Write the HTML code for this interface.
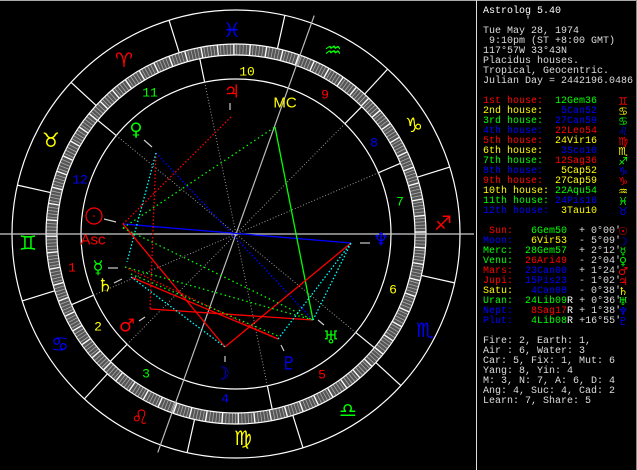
<!DOCTYPE html>
<html><head><meta charset="utf-8"><style>
html,body{margin:0;padding:0;background:#000;width:637px;height:470px;overflow:hidden;position:relative}
svg{display:block;position:absolute;left:0;top:0}
.g{font-family:"DejaVu Sans",sans-serif}
.p{font-family:"Liberation Mono",monospace}
pre{position:absolute;left:483px;margin:0;font-family:"Liberation Mono",monospace;font-size:10px;line-height:10px;color:#ddd;white-space:pre}
.r{color:#f00}.y{color:#ff0}.gr{color:#0f0}.b{color:#00f}.w{color:#fff}
</style></head><body>
<svg width="637" height="470" viewBox="0 0 637 470" xmlns="http://www.w3.org/2000/svg">
<rect width="637" height="470" fill="#000"/>
<line x1="0" y1="0.5" x2="637" y2="0.5" stroke="#aaa"/>
<line x1="476.5" y1="0" x2="476.5" y2="470" stroke="#ddd"/>
<line x1="636.5" y1="0" x2="636.5" y2="470" stroke="#888"/>

<g fill="none" stroke="#fff" stroke-width="1.2">
<circle cx="236" cy="234" r="224"/>
<circle cx="236" cy="234" r="155"/>
</g>
<circle cx="236" cy="234" r="184.5" fill="none" stroke="#555" stroke-width="10"/>
<circle cx="236" cy="234" r="184.5" fill="none" stroke="#aaa" stroke-width="10" stroke-dasharray="0.8 2.42"/>
<circle cx="236" cy="234" r="184.5" fill="none" stroke="#fff" stroke-width="10" stroke-dasharray="1.2 14.9" stroke-dashoffset="3"/>
<g fill="none" stroke="#fff" stroke-width="1.2">
<circle cx="236" cy="234" r="190"/>
<circle cx="236" cy="234" r="179"/>
</g>

<g stroke="#fff" stroke-width="1.2">
<line x1="12" y1="234" x2="46" y2="234" transform="rotate(72.6 236 234)"/>
<line x1="12" y1="234" x2="46" y2="234" transform="rotate(42.6 236 234)"/>
<line x1="12" y1="234" x2="46" y2="234" transform="rotate(12.6 236 234)"/>
<line x1="12" y1="234" x2="46" y2="234" transform="rotate(-17.4 236 234)"/>
<line x1="12" y1="234" x2="46" y2="234" transform="rotate(-47.4 236 234)"/>
<line x1="12" y1="234" x2="46" y2="234" transform="rotate(-77.4 236 234)"/>
<line x1="12" y1="234" x2="46" y2="234" transform="rotate(-107.4 236 234)"/>
<line x1="12" y1="234" x2="46" y2="234" transform="rotate(-137.4 236 234)"/>
<line x1="12" y1="234" x2="46" y2="234" transform="rotate(-167.4 236 234)"/>
<line x1="12" y1="234" x2="46" y2="234" transform="rotate(-197.4 236 234)"/>
<line x1="12" y1="234" x2="46" y2="234" transform="rotate(-227.4 236 234)"/>
<line x1="12" y1="234" x2="46" y2="234" transform="rotate(-257.4 236 234)"/>
</g>
<g stroke="#fff" stroke-width="1.2">
<line x1="57" y1="234" x2="81" y2="234" transform="rotate(-23.27 236 234)"/>
<line x1="57" y1="234" x2="81" y2="234" transform="rotate(-45.38 236 234)"/>
<line x1="57" y1="234" x2="81" y2="234" transform="rotate(-101.67 236 234)"/>
<line x1="57" y1="234" x2="81" y2="234" transform="rotate(-140.57 236 234)"/>
<line x1="57" y1="234" x2="81" y2="234" transform="rotate(-203.27 236 234)"/>
<line x1="57" y1="234" x2="81" y2="234" transform="rotate(-225.38 236 234)"/>
<line x1="57" y1="234" x2="81" y2="234" transform="rotate(-281.67 236 234)"/>
<line x1="57" y1="234" x2="81" y2="234" transform="rotate(39.43 236 234)"/>
</g>
<g stroke="#999" stroke-width="1" stroke-dasharray="1 2">
<line x1="81" y1="234" x2="236" y2="234" transform="rotate(-23.27 236 234)"/>
<line x1="81" y1="234" x2="236" y2="234" transform="rotate(-45.38 236 234)"/>
<line x1="81" y1="234" x2="236" y2="234" transform="rotate(-101.67 236 234)"/>
<line x1="81" y1="234" x2="236" y2="234" transform="rotate(-140.57 236 234)"/>
<line x1="81" y1="234" x2="236" y2="234" transform="rotate(-203.27 236 234)"/>
<line x1="81" y1="234" x2="236" y2="234" transform="rotate(-225.38 236 234)"/>
<line x1="81" y1="234" x2="236" y2="234" transform="rotate(-281.67 236 234)"/>
<line x1="81" y1="234" x2="236" y2="234" transform="rotate(39.43 236 234)"/>
</g>
<line x1="0" y1="234" x2="474" y2="234" stroke="#ccc" stroke-width="1.2"/>
<line x1="4" y1="234" x2="468" y2="234" stroke="#bbb" stroke-width="1.2" transform="rotate(-70.3 236 234)"/>

<g stroke-width="1.3" fill="none">
<line x1="123" y1="224" x2="351" y2="243" stroke="#00f"/>
<line x1="156" y1="153" x2="313" y2="320" stroke="#00f" stroke-dasharray="1.5 2"/>
<line x1="275" y1="127" x2="313" y2="320" stroke="#0f0"/>
<line x1="231" y1="117" x2="123" y2="224" stroke="#f00" stroke-dasharray="1.5 2"/>
<line x1="156" y1="153" x2="150" y2="309" stroke="#f00" stroke-dasharray="1.5 2"/>
<line x1="123" y1="224" x2="225" y2="347" stroke="#f00"/>
<line x1="225" y1="347" x2="351" y2="243" stroke="#f00"/>
<line x1="150" y1="309" x2="313" y2="320" stroke="#f00"/>
<line x1="131" y1="277" x2="278" y2="339" stroke="#f00"/>
<line x1="125" y1="267" x2="278" y2="339" stroke="#f00" stroke-dasharray="1.5 2"/>
<line x1="123" y1="228" x2="275" y2="127" stroke="#0f0" stroke-dasharray="1.5 3"/>
<line x1="125" y1="267" x2="313" y2="320" stroke="#0f0" stroke-dasharray="1.5 3"/>
<line x1="123" y1="228" x2="313" y2="320" stroke="#0f0" stroke-dasharray="1.5 3"/>
<line x1="131" y1="274" x2="278" y2="336" stroke="#0f0" stroke-dasharray="1.5 3"/>
<line x1="156" y1="153" x2="127" y2="262" stroke="#0ff" stroke-dasharray="1.5 2"/>
<line x1="131" y1="277" x2="225" y2="347" stroke="#0ff" stroke-dasharray="1.5 2"/>
<line x1="278" y1="339" x2="351" y2="243" stroke="#0ff" stroke-dasharray="1.5 2"/>
<line x1="313" y1="320" x2="351" y2="243" stroke="#0ff" stroke-dasharray="1.5 2"/>
</g>
<g stroke="#ccc" stroke-width="1.2">
<line x1="104" y1="219" x2="116" y2="222"/>
<line x1="108" y1="268" x2="118" y2="268"/>
<line x1="114" y1="283" x2="122" y2="279"/>
<line x1="139" y1="321" x2="145" y2="317"/>
<line x1="144" y1="140" x2="152" y2="147"/>
<line x1="230" y1="103" x2="230" y2="110"/>
<line x1="225" y1="356" x2="225" y2="362"/>
<line x1="324" y1="325" x2="318" y2="320"/>
<line x1="284" y1="351" x2="281" y2="345"/>
<line x1="360" y1="243" x2="370" y2="243"/>
</g>

<g class="g" font-size="20" text-anchor="middle" dominant-baseline="central">
<text x="124" y="60" fill="#f00">♈</text>
<text x="51" y="140" fill="#ff0">♉</text>
<text x="28" y="243" fill="#0f0">♊</text>
<text x="60" y="344" fill="#00f">♋</text>
<text x="140" y="417" fill="#f00">♌</text>
<text x="243" y="438" fill="#ff0">♍</text>
<text x="348" y="410" fill="#0f0">♎</text>
<text x="425" y="330" fill="#00f">♏</text>
<text x="443" y="223" fill="#f00">♐</text>
<text x="414" y="125" fill="#ff0">♑</text>
<text x="333" y="50" fill="#0f0">♒</text>
<text x="232" y="30" fill="#00f">♓</text>
</g>
<g class="p" font-size="13" text-anchor="middle" dominant-baseline="central">
<text x="72" y="268" fill="#f00">1</text>
<text x="98" y="327" fill="#ff0">2</text>
<text x="146" y="374" fill="#0f0">3</text>
<text x="225" y="399" fill="#00f">4</text>
<text x="322" y="375" fill="#f00">5</text>
<text x="393" y="290" fill="#ff0">6</text>
<text x="400" y="202" fill="#0f0">7</text>
<text x="374" y="143" fill="#00f">8</text>
<text x="325" y="95" fill="#f00">9</text>
<text x="247" y="72" fill="#ff0">10</text>
<text x="150" y="93" fill="#0f0">11</text>
<text x="80" y="180" fill="#00f">12</text>
</g>
<circle cx="94" cy="216" r="8" fill="none" stroke="#f00" stroke-width="1.2"/>
<circle cx="94" cy="216" r="0.8" fill="#f00"/>
<g class="g" font-size="18" text-anchor="middle" dominant-baseline="central">
<text x="222" y="374" fill="#00f">☽</text>
<text x="98" y="268" fill="#0f0">☿</text>
<text x="136" y="130" fill="#0f0">♀</text>
<text x="127" y="326" fill="#f00">♂</text>
<text x="232" y="92" fill="#f00">♃</text>
<text x="105" y="286" fill="#ff0">♄</text>
<text x="331" y="338" fill="#0f0">♅</text>
<text x="381" y="240" fill="#00f">♆</text>
<text x="289" y="364" fill="#00f">♇</text>
</g>
<g font-family="Liberation Sans Narrow, Liberation Sans, sans-serif" font-size="15" text-anchor="middle" dominant-baseline="central">
<text x="93" y="240" fill="#f00">Asc</text>
<text x="285" y="103" fill="#ff0">MC</text>
</g>
<g class="g" font-size="11" text-anchor="middle">
<text x="623" y="105" fill="#f00">♊</text>
<text x="623" y="115" fill="#ff0">♋</text>
<text x="623" y="125" fill="#0f0">♋</text>
<text x="623" y="135" fill="#00f">♌</text>
<text x="623" y="145" fill="#f00">♍</text>
<text x="623" y="155" fill="#ff0">♏</text>
<text x="623" y="165" fill="#0f0">♐</text>
<text x="623" y="175" fill="#00f">♑</text>
<text x="623" y="185" fill="#f00">♑</text>
<text x="623" y="195" fill="#ff0">♒</text>
<text x="623" y="205" fill="#0f0">♓</text>
<text x="623" y="215" fill="#00f">♉</text>
<text x="623" y="235" fill="#f00">☉</text>
<text x="623" y="245" fill="#00f">☽</text>
<text x="623" y="255" fill="#0f0">☿</text>
<text x="623" y="265" fill="#0f0">♀</text>
<text x="623" y="275" fill="#f00">♂</text>
<text x="623" y="285" fill="#f00">♃</text>
<text x="623" y="295" fill="#ff0">♄</text>
<text x="623" y="305" fill="#0f0">♅</text>
<text x="623" y="315" fill="#00f">♆</text>
<text x="623" y="325" fill="#00f">♇</text>
</g>
</svg>
<pre style="top:7px"><span class="w">Astrolog 5.40</span>
       '
Tue May 28, 1974
 9:10pm (ST +8:00 GMT)
117°57W 33°43N
Placidus houses.
Tropical, Geocentric.
Julian Day = 2442196.0486

<span class="r">1st house:</span>  <span class="gr">12Gem36</span>
<span class="y">2nd house:</span>   <span class="b">5Can52</span>
<span class="gr">3rd house:</span>  <span class="b">27Can59</span>
<span class="b">4th house:</span>  <span class="r">22Leo54</span>
<span class="r">5th house:</span>  <span class="y">24Vir16</span>
<span class="y">6th house:</span>   <span class="b">3Sco10</span>
<span class="gr">7th house:</span>  <span class="r">12Sag36</span>
<span class="b">8th house:</span>   <span class="y">5Cap52</span>
<span class="r">9th house:</span>  <span class="y">27Cap59</span>
<span class="y">10th house:</span> <span class="gr">22Aqu54</span>
<span class="gr">11th house:</span> <span class="b">24Pis16</span>
<span class="b">12th house:</span>  <span class="y">3Tau10</span>

<span class="r"> Sun:</span>   <span class="gr">6Gem50</span>  + 0°00'
<span class="b">Moon:</span>   <span class="y">6Vir53</span>  - 5°09'
<span class="gr">Merc:</span>  <span class="gr">28Gem57</span>  + 2°12'
<span class="gr">Venu:</span>  <span class="r">26Ari49</span>  - 2°04'
<span class="r">Mars:</span>  <span class="b">23Can00</span>  + 1°24'
<span class="r">Jupi:</span>  <span class="b">15Pis23</span>  - 1°02'
<span class="y">Satu:</span>   <span class="b">4Can08</span>  - 0°38'
<span class="gr">Uran:</span>  <span class="gr">24Lib09</span><span class="w">R</span> + 0°36'
<span class="b">Nept:</span>   <span class="r">8Sag17</span><span class="w">R</span> + 1°38'
<span class="b">Plut:</span>   <span class="gr">4Lib08</span><span class="w">R</span> +16°55'

Fire: 2, Earth: 1,
Air : 6, Water: 3
Car: 5, Fix: 1, Mut: 6
Yang: 8, Yin: 4
M: 3, N: 7, A: 6, D: 4
Ang: 4, Suc: 4, Cad: 2
Learn: 7, Share: 5</pre>
</body></html>
